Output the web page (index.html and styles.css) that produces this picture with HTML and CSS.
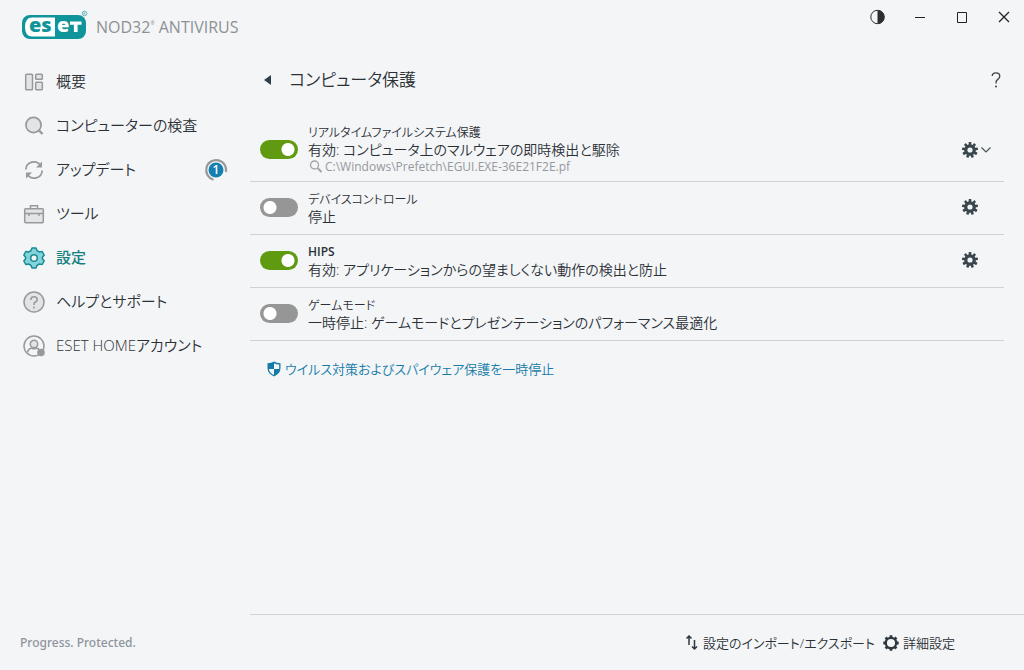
FILE: index.html
```
<!DOCTYPE html>
<html lang="ja">
<head>
<meta charset="utf-8">
<title>ESET NOD32 Antivirus</title>
<link rel="stylesheet" href="styles.css">
</head>
<body>
<svg class="defs" width="0" height="0" aria-hidden="true">
  <symbol id="gear" viewBox="0 0 16 16">
    <g fill="currentColor">
      <rect id="tooth" x="6.7" y="0" width="2.6" height="4" rx=".5"/>
      <use href="#tooth" transform="rotate(40 8 8)"/><use href="#tooth" transform="rotate(80 8 8)"/>
      <use href="#tooth" transform="rotate(120 8 8)"/><use href="#tooth" transform="rotate(160 8 8)"/>
      <use href="#tooth" transform="rotate(200 8 8)"/><use href="#tooth" transform="rotate(240 8 8)"/>
      <use href="#tooth" transform="rotate(280 8 8)"/><use href="#tooth" transform="rotate(320 8 8)"/>
    </g>
    <circle cx="8" cy="8" r="4.2" fill="none" stroke="currentColor" stroke-width="3.2"/>
  </symbol>
</svg>
<div class="app">
  <header class="titlebar">
    <div class="brand">
      <svg class="logo" width="68" height="30" viewBox="0 0 68 30" role="img" aria-label="ESET">
        <rect x="0" y="5" width="64" height="24" rx="8" fill="#0f9499"/>
        <path d="M10 7.500H33V26.500H10Q3 26.500 3 17T10 7.500Z" fill="#fff"/>
        <text class="logo-text" x="7" y="22" fill="#0f9499">es</text>
        <text class="logo-text" x="35" y="22" fill="#fff">e</text>
        <path d="M48 11.500H59.500V14.700H55.600V22H51.900V14.700H48Z" fill="#fff"/>
        <circle cx="62.500" cy="3.500" r="2.300" fill="none" stroke="#4dabb0" stroke-width=".8"/>
        <path d="M61.800 4.900V2.300H62.800Q63.600 3 62.800 3.600H61.800M62.700 3.600L63.400 4.900" fill="none" stroke="#4dabb0" stroke-width=".5"/>
      </svg>
      <span class="product">NOD32<sup>®</sup> ANTIVIRUS</span>
    </div>
    <div class="window-buttons">
      <button aria-label="テーマ"><svg width="16" height="16" viewBox="0 0 16 16"><circle cx="7.500" cy="8" r="6.700" fill="none" stroke="#2b2f33"/><path d="M7.500 1A7 7 0 0 1 7.500 15Z" fill="#2b2f33"/></svg></button>
      <button aria-label="最小化"><svg width="16" height="16" viewBox="0 0 16 16"><path d="M3 8.500H13" stroke="#222"/></svg></button>
      <button aria-label="最大化"><svg width="16" height="16" viewBox="0 0 16 16"><path d="M3.500 3.500H12.500V13.500H3.500Z" fill="none" stroke="#222"/></svg></button>
      <button aria-label="閉じる"><svg width="16" height="16" viewBox="0 0 16 16"><path d="M3 3L13 13M13 3L3 13" stroke="#222" stroke-width="1.300"/></svg></button>
    </div>
  </header>

  <aside class="sidebar">
    <nav class="nav">
      <a href="#"><svg width="22" height="22" viewBox="0 0 22 22" fill="#e3e4e7" stroke="#97999b" stroke-width="1.500"><rect x="2.700" y="3.200" width="6.800" height="15.500" rx=".8"/><rect x="12.700" y="3.200" width="6.600" height="5" rx=".8"/><rect x="12.700" y="11.200" width="6.600" height="7.500" rx=".8"/></svg><span>概要</span></a>
      <a href="#"><svg width="22" height="22" viewBox="0 0 22 22" fill="#e3e4e7" stroke="#97999b" stroke-width="1.700"><circle cx="10.500" cy="10" r="7.600"/><path d="M16 15.500L19.500 19" stroke-width="2.400"/></svg><span>コンピューターの検査</span></a>
      <a href="#"><svg width="22" height="22" viewBox="0 0 22 22" fill="none" stroke="#97999b" stroke-width="1.700"><path d="M2.800 10.500A8 8 0 0 1 17.500 6.500M19.200 11.500A8 8 0 0 1 4.500 15.500"/><path d="M19 2.500V8.500H13ZM3 19.500V13.500H9Z" fill="#97999b" stroke="none"/></svg><span>アップデート</span>
        <span class="badge"><svg width="24" height="24" viewBox="0 0 24 24"><path d="M9.500 21.700A10 10 0 1 1 22 14" fill="none" stroke="#97999b" stroke-width="2.200"/><circle cx="12" cy="12" r="7.500" fill="#157fb0"/><text class="badge-text" x="12" y="16" text-anchor="middle">1</text></svg></span></a>
      <a href="#"><svg width="22" height="22" viewBox="0 0 22 22" fill="#e3e4e7" stroke="#97999b" stroke-width="1.500"><path d="M7.500 6V2.700H14.500V6" fill="none"/><rect x="1.700" y="5.700" width="18.600" height="14" rx="1"/><path d="M2 10.500H20M6 10V13M16 10V13" fill="none"/></svg><span>ツール</span></a>
      <a href="#" class="active" aria-current="page"><svg width="22" height="22" viewBox="0 0 22 22" fill="#85d3da" stroke="#168b91" stroke-width="1.500" stroke-linejoin="round"><path d="M9 1H13L14 3.600L16.400 5L19.200 4.500L21.200 8L19.400 10.200V11.800L21.200 14L19.200 17.500L16.400 17L14 18.400L13 21H9L8 18.400L5.600 17L2.800 17.500L.8 14L2.600 11.800V10.200L.8 8L2.800 4.500L5.600 5L8 3.600Z"/><circle cx="11" cy="11" r="3.300" fill="#f3f5f7"/></svg><span>設定</span></a>
      <a href="#"><svg width="22" height="22" viewBox="0 0 22 22" fill="#e3e4e7" stroke="#97999b" stroke-width="1.500"><circle cx="11" cy="11" r="10"/><path d="M7.800 9Q7.800 5.800 11 5.800T14.200 8.800Q14.200 10.200 12.500 11T11 13.500V14" fill="none"/><circle cx="11" cy="16.500" r="1" fill="#97999b" stroke="none"/></svg><span>ヘルプとサポート</span></a>
      <a href="#"><svg width="22" height="22" viewBox="0 0 22 22" fill="none" stroke="#97999b" stroke-width="1.500"><circle cx="11" cy="11" r="10"/><circle cx="11" cy="9" r="3.700" fill="#e3e4e7"/><path d="M4.500 17.500Q5 14 8.700 13Q11 14.500 13.300 13Q15.500 13.500 16.500 15"/><circle cx="18" cy="17.500" r="3.800" fill="#97999b" stroke="none"/></svg><span>ESET HOMEアカウント</span></a>
    </nav>
    <p class="tagline">Progress. Protected.</p>
  </aside>

  <main class="content">
    <div class="heading">
      <button class="back" aria-label="戻る"><svg width="10" height="12" viewBox="0 0 10 12"><path d="M8 1V11L1 6Z" fill="#2f3d49"/></svg></button>
      <h1>コンピュータ保護</h1>
      <button class="help" aria-label="ヘルプ"><svg width="16" height="20" viewBox="0 0 16 20"><path d="M4.200 6Q4.200 2.800 8 2.800T11.800 6Q11.800 8 9.800 9.400T8 13V13.500" fill="none" stroke="#3c444b" stroke-width="1.300"/><circle cx="8" cy="16.500" r="1" fill="#3c444b"/></svg></button>
    </div>
    <ul class="features">
      <li>
        <input type="checkbox" class="toggle" id="realtime" checked>
        <label for="realtime"><span class="name">リアルタイムファイルシステム保護</span><span class="status">有効: コンピュータ上のマルウェアの即時検出と駆除</span><span class="path"><svg width="14" height="14" viewBox="0 0 14 14" fill="none" stroke="#a3a5a8" stroke-width="1.300"><circle cx="5.500" cy="5" r="4"/><path d="M8.500 8L12.500 12" stroke-width="2"/></svg>C:\Windows\Prefetch\EGUI.EXE-36E21F2E.pf</span></label>
        <button class="options" aria-label="設定"><svg width="16" height="16"><use href="#gear"/></svg><svg width="12" height="8" viewBox="0 0 12 8"><path d="M1.500 1.500L6 6L10.500 1.500" fill="none" stroke="#4a5359" stroke-width="1.200"/></svg></button>
      </li>
      <li>
        <input type="checkbox" class="toggle" id="device">
        <label for="device"><span class="name">デバイスコントロール</span><span class="status">停止</span></label>
        <button class="options" aria-label="設定"><svg width="16" height="16"><use href="#gear"/></svg></button>
      </li>
      <li>
        <input type="checkbox" class="toggle" id="hips" checked>
        <label for="hips"><span class="name latin">HIPS</span><span class="status">有効: アプリケーションからの望ましくない動作の検出と防止</span></label>
        <button class="options" aria-label="設定"><svg width="16" height="16"><use href="#gear"/></svg></button>
      </li>
      <li>
        <input type="checkbox" class="toggle" id="game">
        <label for="game"><span class="name">ゲームモード</span><span class="status">一時停止: ゲームモードとプレゼンテーションのパフォーマンス最適化</span></label>
      </li>
    </ul>
    <a href="#" class="pause"><svg width="14" height="16" viewBox="0 0 14 16"><path d="M7 .5Q9.500 2.300 13.500 2.300V7Q13.500 12.500 7 15.500Q.5 12.500 .5 7V2.300Q4.500 2.300 7 .5Z" fill="#147ba8"/><path d="M7 2.200Q9 3.500 12.200 3.600V8H7ZM7 8V14Q2.500 12 1.900 8Z" fill="#f3f5f7"/></svg>ウイルス対策およびスパイウェア保護を一時停止</a>
  </main>

  <footer class="footer">
    <a href="#"><svg width="14" height="16" viewBox="0 0 14 16" fill="none" stroke="#30383f" stroke-width="1.500"><path d="M4 10V1M1.500 3.500L4 1L6.500 3.500M9.500 5V14M7 11.500L9.500 14L12 11.500"/></svg>設定のインポート/エクスポート</a>
    <a href="#"><svg width="16" height="16" viewBox="0 0 16 16"><g stroke="#30383f" stroke-width="2.800"><path d="M8 .3V3M8 13V15.700M.3 8H3M13 8H15.700M2.600 2.600L4.500 4.500M11.500 11.500L13.400 13.400M2.600 13.400L4.500 11.500M11.500 4.500L13.400 2.600"/></g><circle cx="8" cy="8" r="5.200" fill="none" stroke="#30383f" stroke-width="2.300"/></svg>詳細設定</a>
  </footer>
</div>
</body>
</html>
```
FILE: styles.css
```
* { box-sizing: border-box; }
body {
  margin: 0;
  background: #f3f5f7;
  color: #2c3136;
  font-family: "Open Sans", "Noto Sans CJK JP", sans-serif;
  font-size: 13px;
  font-weight: 350;
  font-feature-settings: "palt";
}
.defs { position: absolute; }
a { color: inherit; text-decoration: none; }
svg { flex: none; display: block; }
button { border: 0; padding: 0; background: none; color: inherit; display: flex; align-items: center; justify-content: center; }
.app {
  display: grid;
  grid-template-columns: 250px 1fr;
  grid-template-rows: 60px 1fr 56px;
  min-height: 100vh;
}
.titlebar { grid-column: 1 / -1; display: flex; justify-content: space-between; align-items: flex-start; }
.brand { display: flex; align-items: center; gap: 6px; padding: 10px 0 0 22px; }
.logo-text { font: 800 20px "Open Sans", sans-serif; }
.product { color: #8d9195; font-family: "Noto Sans", sans-serif; font-size: 17px; font-weight: 400; line-height: 24px; padding-top: 4px; white-space: nowrap; }
.product { font-family: "Open Sans", sans-serif; font-size: 16px; }
.product sup { font-size: 5px; vertical-align: 8px; line-height: 0; }
.window-buttons { display: flex; gap: 2px; }
.window-buttons button { width: 40px; height: 34px; }

.sidebar { grid-row: 2 / 4; display: flex; flex-direction: column; justify-content: space-between; }
.nav a { display: flex; align-items: center; gap: 11px; height: 44px; padding: 0 22px 0 23px; font-size: 15px; line-height: 20px; white-space: nowrap; }
.nav a > span { padding-bottom: 2px; }
.nav .active { color: #16807f; font-weight: 500; }
.nav .badge { margin-left: auto; padding: 0; }
.badge-text { font: 600 12px "Open Sans", sans-serif; fill: #fff; }
.tagline { margin: 0 0 18px 20px; color: #8e949a; font: 500 12px/18px "Noto Sans", sans-serif; }

.content { padding-right: 20px; }
.heading { display: flex; align-items: center; height: 40px; padding-left: 13px; }
.back { width: 10px; height: 20px; }
h1 { margin: 0 auto 0 16px; font-size: 17px; line-height: 28px; font-weight: 350; }
.help { width: 16px; height: 20px; }
.features { list-style: none; margin: 15px 0 0; padding: 0; }
.features li { display: flex; align-items: center; gap: 10px; padding: 8px 10px 10px; border-bottom: 1px solid #cfd2d5; }
.features li:first-child { padding-bottom: 5px; }
.toggle { appearance: none; flex: none; width: 38px; height: 19px; margin: 0; border-radius: 10px; background: radial-gradient(circle at 10px 50%, #fff 6px, transparent 7px) #969696; }
.toggle:checked { background: radial-gradient(circle at 28px 50%, #fff 6px, transparent 7px) #609a11; }
label { flex: 1; }
.name, .status, .path { display: flex; align-items: center; height: 17px; white-space: nowrap; }
.name { font-size: 12px; }
.latin { font-weight: 600; }
.status { font-size: 14px; }
.path { height: 19px; gap: 2px; padding-left: 1px; color: #96999d; font-size: 12px; font-weight: 400; }
.options { width: 32px; gap: 2px; color: #3a464e; justify-content: flex-start; }
.pause { display: inline-flex; align-items: center; gap: 4px; margin: 17px 0 0 17px; color: #147ba8; line-height: 22px; }

.footer { display: flex; align-items: center; justify-content: flex-end; gap: 8px; padding-right: 69px; border-top: 1px solid #cfd2d5; }
.footer a { display: flex; align-items: center; gap: 4px; white-space: nowrap; }
```
